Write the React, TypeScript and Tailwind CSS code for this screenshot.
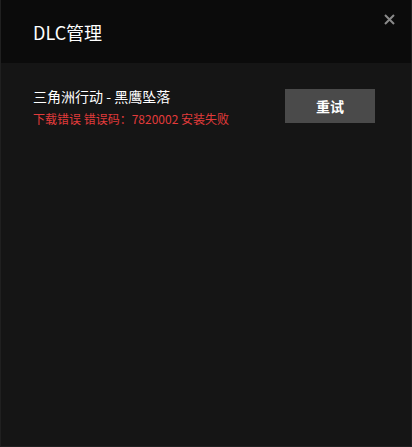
import React from 'react';

const FONT = '"Microsoft YaHei", "Noto Sans CJK SC", "Noto Sans", sans-serif';

interface DlcItem {
  name: string;
  error: string;
}

const items: DlcItem[] = [
  { name: '三角洲行动 - 黑鹰坠落', error: '下载错误 错误码：7820002 安装失败' },
];

const App: React.FC = () => {
  return (
    <div
      className="w-[412px] h-[447px] flex flex-col bg-[#151515] border-x border-b border-[#202020] overflow-hidden"
      style={{ fontFamily: FONT }}
    >
      {/* Header */}
      <div className="relative h-[63px] shrink-0 bg-[#0b0b0b] flex items-center pl-[32px]">
        <span className="text-[18px] text-white leading-none">DLC管理</span>
        <button className="absolute right-[16px] top-[13px] w-[12px] h-[12px] flex items-center justify-center text-[#8a8a8a]">
          <svg width="11" height="11" viewBox="0 0 11 11" fill="none">
            <path d="M1 1L10 10M10 1L1 10" stroke="currentColor" strokeWidth="2" />
          </svg>
        </button>
      </div>

      {/* List */}
      <div className="flex flex-col pt-[26px] pl-[32px] pr-[36px]">
        {items.map((item) => (
          <div key={item.name} className="flex items-start justify-between">
            <div className="flex flex-col">
              <span className="text-[14px] text-white leading-[14px]">{item.name}</span>
              <span className="mt-[10px] text-[12px] text-[#e23b3b] leading-[12px]">{item.error}</span>
            </div>
            <button className="w-[90px] h-[34px] bg-[#4a4a4a] text-white text-[14px] font-bold flex items-center justify-center">
              重试
            </button>
          </div>
        ))}
      </div>
    </div>
  );
};

export default App;
